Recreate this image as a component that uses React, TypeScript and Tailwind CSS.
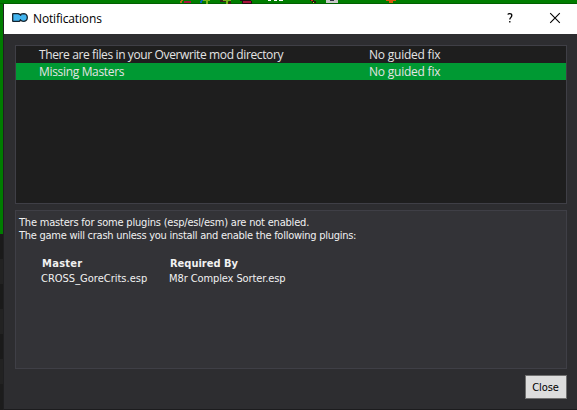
import React from "react";

const ui = "font-['Open_Sans','Noto_Sans',sans-serif]";
const tahoma = "font-['DejaVu_Sans_Condensed','DejaVu_Sans',sans-serif]";

function ToolbarSliver() {
  return (
    <svg className="block h-1 w-full" viewBox="0 0 577 4" preserveAspectRatio="none" shapeRendering="crispEdges">
      <rect width="577" height="4" fill="#007d00" />
      <rect y="3" width="577" height="1" fill="#005f00" />
      <path d="M181 0h2v1h-1v2h-2v-2h1z" fill="#b56a1c" />
      <path d="M184 1h7v2h-7z" fill="#a8123c" />
      <path d="M201 0h2v1h-1v2h-2v-2h1z" fill="#0a62b8" />
      <path d="M203 0h7v1h-2v3h-2v-3h-3z" fill="#78b41c" />
      <path d="M220 0h3v2h-3zM223 1h3v1h-3zM229 1h2v3h-5v-2h3z" fill="#3a2416" />
      <path d="M223 0h8v1h-3v3h-2v-3h-3z" fill="#78b41c" />
      <path d="M240 0h11v1h1v3h-10v-3h-2z" fill="#201010" />
      <path d="M243 1h8v2h-8z" fill="#a8123c" />
      <path d="M268 0h3v1h-3zM274 0h3v1h-3zM279 0h4v1h-4z" fill="#fff" />
      <path d="M310 0h4v1h2v2h-4v-2h-2z" fill="#251a10" />
      <path d="M311 0h2v1h-2z" fill="#c83020" />
      <path d="M313 2h1v1h-1z" fill="#b8e020" />
      <path d="M326 0h12v3h-12z" fill="#c8c8c8" />
      <path d="M330 0h4v1h-4z" fill="#303040" />
      <path d="M386 0h10v1h-3v2h-4v-2h-3z" fill="#d8580c" />
    </svg>
  );
}

function AppIcon() {
  return (
    <svg className="mt-[9px] ml-2 block h-[9px] w-4 shrink-0" viewBox="0 0 16 9">
      <path
        d="M.7 1.200Q.7.700 1.200.7H6.200L8.300 1.700Q9.500.7 12 .7Q15.300 1.200 15.300 4.500Q15.300 7.800 12 8.300Q10 8.300 8.700 7.200L7.300 8.300H1.200Q.7 8.300.7 7.800Z"
        fill="#42b4ef" stroke="#14242f" strokeWidth="1.300" />
      <path d="M8.300 1.700L9 3M8.700 7.200L8.100 6" fill="none" stroke="#14242f" strokeWidth="1" />
    </svg>
  );
}

function NoticeRow({ name, tracking, selected = false }: { name: string; tracking: string; selected?: boolean }) {
  return (
    <div className={`flex h-[17px] text-[12px] leading-[17px] text-[#e4e4e4] ${selected ? "bg-[#009933]" : ""}`}>
      <span className={`w-[330px] shrink-0 pl-[23px] ${tracking}`}>{name}</span>
      <span className="pl-[23px] tracking-[-0.22px]">No guided fix</span>
    </div>
  );
}

export default function App() {
  return (
    <div className="flex h-[410px] w-[577px] flex-col overflow-hidden bg-[#2d2d30]">
      <ToolbarSliver />
      <div className="flex min-h-0 flex-1">
        <div className="w-1 shrink-0 border-r border-black/30 bg-[#1c1c1c] bg-clip-padding">
          <div className="h-[230px] bg-[#007d00]" />
          <div className="h-[25px] bg-[#1a1a1a]" />
          <div className="h-[25px] bg-[#222]" />
          <div className="h-[25px] bg-[#1a1a1a]" />
          <div className="h-[25px] bg-[#222]" />
          <div className="h-[25px] bg-[#1a1a1a]" />
          <div className="h-[25px] bg-[#222]" />
        </div>
        <div className="flex min-w-0 flex-1 flex-col border-b border-[#1c1c1e]">
          <header className={`flex h-[30px] shrink-0 bg-white text-black ${ui}`}>
            <AppIcon />
            <span className="ml-[5px] text-[12px] leading-[30px] tracking-[-0.15px]">Notifications</span>
            <svg className="ml-auto h-[30px] w-[70px] shrink-0" viewBox="0 0 70 30" fill="none" stroke="#000">
              <path d="M.7 10.500Q1.300 9.600 2.700 9.600Q4.800 9.600 4.800 11.400Q4.800 12.500 3.800 13.400Q2.800 14.200 2.800 15.500M2.800 17v1.500" strokeWidth="1.300" />
              <path d="M43.200 9.200l9.600 9.600M52.800 9.200l-9.600 9.600" strokeWidth="1.100" />
            </svg>
          </header>
          <main className="flex flex-1 flex-col pt-[11px] pr-[10px] pl-[11px]">
            <section className={`h-[159px] w-[552px] border border-[#3f3f46] bg-[#1e1e1e] ${ui}`}>
              <NoticeRow name="There are files in your Overwrite mod directory" tracking="tracking-[-0.38px]" />
              <NoticeRow name="Missing Masters" tracking="tracking-[-0.33px]" selected />
            </section>
            <section className={`mt-1.5 h-[159px] w-[552px] border border-[#3f3f46] bg-[#333337] pt-[5px] pl-[3px] text-[11px] leading-[13px] text-[#f1f1f1] ${tahoma}`}>
              <p className="tracking-[-0.2px]">The masters for some plugins (esp/esl/esm) are not enabled.</p>
              <p className="tracking-[-0.26px]">The game will crash unless you install and enable the following plugins:</p>
              <div className="mt-[14px] grid grid-cols-[128px_auto] pl-[22px] leading-[15px]">
                <b className="pl-px tracking-[0.3px]">Master</b>
                <b className="pl-px">Required By</b>
                <span>CROSS_GoreCrits.esp</span>
                <span className="tracking-[-0.1px]">M8r Complex Sorter.esp</span>
              </div>
            </section>
            <button className={`mt-1.5 h-6 w-[42px] self-end border border-[#707070] bg-[#ddd] pt-px pr-px text-[11px] leading-[22px] tracking-[-0.1px] text-black ${tahoma}`}>Close</button>
          </main>
        </div>
      </div>
    </div>
  );
}
